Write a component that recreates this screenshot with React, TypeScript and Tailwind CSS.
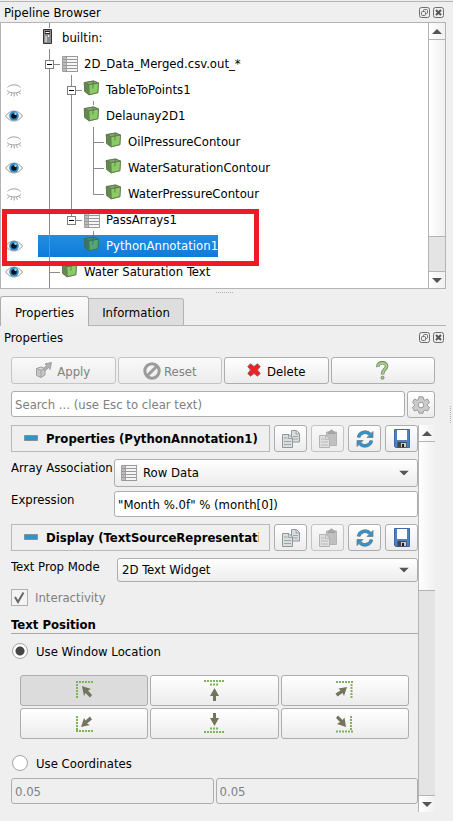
import { useState, type ReactNode } from 'react';

const EyeOpen = () => (
  <svg width="18" height="14" viewBox="0 0 18 14">
    <path d="M.5 7C3 3.600 6 2 9 2s6 1.600 8.500 5C15 10.400 12 12 9 12S3 10.400.5 7z" fill="#f6f6f6" stroke="#9a9a9a" />
    <circle cx="9" cy="6.800" r="4.800" fill="#2f8fc8" />
    <circle cx="9" cy="7" r="2.800" fill="#06131f" />
    <circle cx="10.500" cy="4.800" r="1.300" fill="#9fd2ee" />
  </svg>
);

const EyeClosed = () => (
  <svg width="18" height="14" viewBox="0 0 18 14" fill="none" stroke="#a0a0a0">
    <path d="M2.500 4.500C5 1 13 1 15.500 4.500" />
    <path d="M2 7.500c3 3.300 11 3.300 14 0M4 9.500l-1.500 2M6.800 10.300L6 13M9.200 10.300V13.500M11.500 10.200l.9 2.700M14 9.300l1.600 2" />
  </svg>
);

const Cube = ({ tinted = false }: { tinted?: boolean }) => (
  <svg width="17" height="16" viewBox="0 0 17 16">
    <path d="M.8 2.300L10.500.6l5.300 2.100-.6 10.300L6 15.200 1.300 11.500z" fill={tinted ? '#3f7f63' : '#6a8f55'} />
    <path d="M6 5l9.300-1.600-.5 9.200L6.300 14.500z" fill={tinted ? '#55a873' : '#8acb66'} />
    <path d="M1.800 3.300L5 5.500v8L2.200 11z" fill={tinted ? '#35756a' : '#5f8a50'} />
    <path d="M3 2.800L10.300 1.500 13.500 2.800 6 4z" fill={tinted ? '#3f8a76' : '#86a873'} />
    <path d="M1.300 2.600L5.800 4.800 15.500 3M5.800 4.800L6.200 14.800M10.300 1.200L9.800 8.500M1.300 2.600l9.200-1.600 5 2-.6 9.700-8.700 2.100-4.500-3.300z" fill="none" stroke={tinted ? '#3c6f62' : '#63784f'} strokeWidth=".9" />
  </svg>
);

const TableIcon = () => (
  <svg width="17" height="16" viewBox="0 0 17 16">
    <path d="M1 1h15v14H1z" fill="#f5f5f5" />
    <path d="M1 1h4v14H1z" fill="#bdbdbd" />
    <path d="M.5.5h15.500M.5 3.500h15.500M.5 6.500h15.500M.5 9.500h15.500M.5 12.500h15.500M.5 15.500h15.500" stroke="#999" />
    <path d="M.5.5v15M4.500 1v14M15.500 1v14" stroke="#a0a0a0" fill="none" />
  </svg>
);

const Server = () => (
  <svg width="9" height="15" viewBox="0 0 9 15">
    <path d="M.5.5h8v14h-8z" fill="#8d8d8d" stroke="#333" />
    <path d="M2 2h5v3H2z" fill="#222" />
    <path d="M2.500 3.500h4" stroke="#fff" />
    <path d="M2 7h2v6H2z" fill="#c5c5c5" />
    <path d="M5.500 6v2" stroke="#eee" />
  </svg>
);

type Node = {
  label: string;
  x: number;
  eye?: 'open' | 'closed';
  icon: ReactNode;
  iconPad: string;
  guides: string;
  toggle?: number;
  selected?: boolean;
};

// Guide coordinates start at the left edge of the label column, one 26px row high.
const nodes: Node[] = [
  { label: 'builtin:', x: 0, icon: <Server />, iconPad: 'pl-[4px] pb-[4px]', guides: 'M11.500-2V3M11.500 24V26' },
  { label: '2D_Data_Merged.csv.out_*', x: 22, icon: <TableIcon />, iconPad: 'pl-[1px]', guides: 'M11.500 0V26M16 13.500H22', toggle: 7 },
  { label: 'TableToPoints1', x: 44, eye: 'closed', icon: <Cube />, iconPad: 'pb-[4px]', guides: 'M11.500 0V26M33.500-2V26M38 13.500H44', toggle: 29 },
  { label: 'Delaunay2D1', x: 44, eye: 'open', icon: <Cube />, iconPad: 'pb-[4px]', guides: 'M11.500 0V26M33.500 0V26M55.500-2V2' },
  { label: 'OilPressureContour', x: 66, eye: 'closed', icon: <Cube />, iconPad: 'pb-[4px]', guides: 'M11.500 0V26M33.500 0V26M55.500-2V26M55.500 13.500H66' },
  { label: 'WaterSaturationContour', x: 66, eye: 'open', icon: <Cube />, iconPad: 'pb-[4px]', guides: 'M11.500 0V26M33.500 0V26M55.500 0V26M55.500 13.500H66' },
  { label: 'WaterPressureContour', x: 66, eye: 'closed', icon: <Cube />, iconPad: 'pb-[4px]', guides: 'M11.500 0V26M33.500 0V26M55.500 0V13.500H66' },
  { label: 'PassArrays1', x: 44, icon: <TableIcon />, iconPad: 'pl-[1px]', guides: 'M11.500 0V26M33.500 0V13.500M38 13.500H44', toggle: 29 },
  { label: 'PythonAnnotation1', x: 44, eye: 'open', icon: <Cube tinted />, iconPad: 'pb-[4px]', guides: 'M11.500 0V26M55.500-2V2', selected: true },
  { label: 'Water Saturation Text', x: 22, eye: 'open', icon: <Cube />, iconPad: 'pb-[4px]', guides: 'M11.500 0V30M11.500 13.500H22' },
];

const indent: Record<number, string> = { 0: 'w-[1px]', 22: 'w-[23px]', 44: 'w-[45px]', 66: 'w-[67px]' };

function TreeRow({ node }: { node: Node }) {
  return (
    <li className="flex h-[26px] items-center">
      <div className="flex w-[37px] shrink-0 pl-[4px]">
        {node.eye && (
          <button aria-label={`Toggle visibility of ${node.label}`}>
            {node.eye === 'open' ? <EyeOpen /> : <EyeClosed />}
          </button>
        )}
      </div>
      <div
        className={`relative flex h-[22px] items-center ${
          node.selected ? 'bg-linear-to-b from-[#228de0] to-[#0c7cdb] text-white' : ''
        }`}
      >
        <svg className="absolute -top-[2px] left-0 overflow-visible" width="67" height="26">
          <path d={node.guides} fill="none" stroke="#8a8a8a" />
          {node.toggle && (
            <>
              <rect x={node.toggle + 0.5} y="9.500" width="8" height="8" fill="#fff" stroke="#7d7d7d" />
              <path d={`M${node.toggle + 2} 13.500h5`} stroke="#000" />
            </>
          )}
        </svg>
        <span className={`shrink-0 ${indent[node.x]}`} />
        <span className={`flex w-[23px] shrink-0 ${node.iconPad}`}>{node.icon}</span>
        <span className="leading-[24px] whitespace-nowrap">{node.label}</span>
      </div>
    </li>
  );
}

function DockTitle({ title }: { title: string }) {
  return (
    <div className="flex h-[20px] items-center justify-between pr-[2px] pl-[4px]">
      <h2 className="pt-[2px]">{title}</h2>
      <div className="flex gap-[3px]">
        <button aria-label={`Float ${title}`}>
          <svg width="11" height="11" viewBox="0 0 11 11" fill="none" stroke="#6d6d6d">
            <rect x=".5" y=".5" width="10" height="10" rx="2" />
            <rect x="4.500" y="2.500" width="4" height="4" rx="1" />
            <rect x="2.500" y="4.500" width="4" height="4" rx="1" fill="#efefef" />
          </svg>
        </button>
        <button aria-label={`Close ${title}`}>
          <svg width="11" height="11" viewBox="0 0 11 11" fill="none" stroke="#6d6d6d">
            <rect x=".5" y=".5" width="10" height="10" rx="2" />
            <path d="M3 3l5 5M8 3L3 8" stroke="#555" strokeWidth="2" />
          </svg>
        </button>
      </div>
    </div>
  );
}

function ScrollBar({ thumb }: { thumb: string }) {
  return (
    <div className="flex w-[17px] shrink-0 flex-col border-l border-[#b4b4b4] bg-[#e4e4e4]">
      <button aria-label="Scroll up" className="flex h-[17px] items-center justify-center border-b border-[#b4b4b4] bg-linear-to-r from-white to-[#f0f0f0]">
        <svg width="10" height="5"><path d="M0 5L5 0l5 5z" fill="#555" /></svg>
      </button>
      <div className={`border-b border-[#b4b4b4] bg-linear-to-r from-white to-[#f0f0f0] ${thumb}`} />
      <div className="flex-1" />
      <button aria-label="Scroll down" className="flex h-[17px] items-center justify-center border-t border-[#b4b4b4] bg-linear-to-r from-white to-[#f0f0f0]">
        <svg width="10" height="5"><path d="M0 0L5 5l5-5z" fill="#555" /></svg>
      </button>
    </div>
  );
}

const face = 'rounded-[3px] border border-[#adadad] bg-linear-to-b from-white to-[#ececec]';
const faceOff = 'rounded-[3px] border border-[#c4c4c4] bg-linear-to-b from-[#f9f9f9] to-[#ececec]';
const field = 'min-w-0 rounded-[3px] border border-[#adadad] h-[26px] px-[3px]';

const CopyIcon = () => (
  <svg width="20" height="20" viewBox="0 0 20 20" fill="#d9dedf" stroke="#8f9798">
    <path d="M10.500 1.500h5l3 3v8.500h-8z" />
    <path d="M15 2v3h3.500M12 7.500h5M12 10h5" fill="none" strokeWidth=".8" />
    <path d="M1.500 5.500h6.500l3.500 3.500v9.500h-10z" />
    <path d="M7.500 6v3.500H11M3 9h3.500M3 12.500h7M3 15.500h7" fill="none" strokeWidth=".8" />
  </svg>
);

const PasteIcon = () => (
  <svg width="20" height="20" viewBox="0 0 20 20" fill="#dedede" stroke="#b3b3b3">
    <path d="M8.500 3h10v13.500h-10z" fill="#c0c0c0" />
    <path d="M10 4.500c0-2 1.500-2 2-2 0-2 3-2 3 0 .5 0 2 0 2 2z" fill="#aaa" stroke="#9f9f9f" />
    <path d="M1.500 6.500h6.500l3.500 3.500v8.500h-10z" />
    <path d="M7.500 7v3.500H11M3 10h3.500M3 13h7M3 16h7" fill="none" strokeWidth=".8" />
  </svg>
);

const ReloadIcon = () => (
  <svg width="20" height="20" viewBox="0 0 20 20">
    <path d="M3.500 8.500C4.500 3.500 11 1.200 15 5.200" fill="none" stroke="#747b7b" strokeWidth="3.600" />
    <path d="M18 2.500V8.500H12z" fill="#2f93cf" stroke="#747b7b" strokeWidth=".8" />
    <path d="M3.600 8.200C4.800 3.500 11 1.400 15 5.200" fill="none" stroke="#2f93cf" strokeWidth="2.600" />
    <path d="M16.500 11.500C15.500 16.500 9 18.800 5 14.800" fill="none" stroke="#747b7b" strokeWidth="3.600" />
    <path d="M2 17.500V11.500H8z" fill="#2f93cf" stroke="#747b7b" strokeWidth=".8" />
    <path d="M16.400 11.800C15.200 16.500 9 18.600 5 14.800" fill="none" stroke="#2f93cf" strokeWidth="2.600" />
  </svg>
);

const SaveIcon = () => (
  <svg width="18" height="20" viewBox="0 0 18 20">
    <path d="M1.500.5h15v18h-14l-1-1z" fill="#4f80c4" stroke="#3f68a5" />
    <path d="M4 1h10v10H4z" fill="#fff" />
    <path d="M4.500 13h9v5.500h-9z" fill="#444" />
    <path d="M8 14h5v4H8z" fill="#cfcdb9" />
    <path d="M9 15h2v3H9z" fill="#1b1b1b" />
  </svg>
);

function SectionHeader({ title }: { title: string }) {
  return (
    <div className="flex h-[27px] gap-[4px]">
      <button className="flex min-w-0 flex-1 items-center gap-[8px] border border-[#b8b8b8] pr-[10px] pl-[12px] text-left font-bold">
        <svg className="mb-[2px] shrink-0" width="14" height="6"><path d="M.5.5h13v5H.5z" fill="#2f93cf" stroke="#82909a" /></svg>
        <span className="overflow-hidden whitespace-nowrap">{title}</span>
      </button>
      <button aria-label="Copy" className={`flex w-[33px] items-center justify-center ${face}`}><CopyIcon /></button>
      <button aria-label="Paste" disabled className={`flex w-[33px] items-center justify-center ${faceOff}`}><PasteIcon /></button>
      <button aria-label="Restore defaults" className={`flex w-[33px] items-center justify-center ${face}`}><ReloadIcon /></button>
      <button aria-label="Save as defaults" className={`flex w-[33px] items-center justify-center ${face}`}><SaveIcon /></button>
    </div>
  );
}

const DropArrow = () => (
  <svg className="pointer-events-none absolute top-1/2 right-[9px] -translate-y-1/2" width="10" height="5">
    <path d="M0 0h10L5 5z" fill="#555" />
  </svg>
);

const anchors = [
  { name: 'Upper left', dots: 'M2 3h17M3 5v14', arrow: 'M8 7l9 3-3 1.500 4 4.500-2 2.500-4.500-4.500-1.500 3z' },
  { name: 'Upper center', dots: 'M0 2h20M6 5.500h9', arrow: 'M10.500 9l4.500 8h-3v5h-3v-5H6z' },
  { name: 'Upper right', dots: 'M2 3h17M17.500 5v14', arrow: 'M13 8l-3 9-1.500-3-5 3.500-2-3 5-3-2-2z' },
  { name: 'Lower left', dots: 'M3 4v14M2 19h17', arrow: 'M7 15l3-9 1.500 2.500L16 4.500l2 3-5 4 3 1.500z' },
  { name: 'Lower center', dots: 'M6 16.500h9M0 20h20', arrow: 'M10.500 14L6 6h3V1h3v5h3z' },
  { name: 'Lower right', dots: 'M17 4v14M2 19.500h17', arrow: 'M12 15l-9-3 3-2-4-4 2-2.500L8.500 8l2-2.500z' },
];

const radio =
  'size-[16px] shrink-0 appearance-none rounded-full border border-[#a3a3a3] bg-white checked:bg-[radial-gradient(circle,#454545_0,#454545_4px,white_5px)]';

export default function App() {
  const [anchor, setAnchor] = useState('Upper left');
  const [mode, setMode] = useState('window');

  return (
    <main className="flex min-h-screen flex-col bg-[#efefef] pr-[7px] font-['DejaVu_Sans_Condensed','DejaVu_Sans',sans-serif] text-[13px] leading-[16px] text-black">
      <section aria-label="Pipeline Browser">
        <div className="-mr-[7px] h-[2px] border-b border-[#b4b4b4]" />
        <DockTitle title="Pipeline Browser" />
        <div className="relative flex h-[267px] border border-[#b4b4b4] bg-white">
          <ul className="min-w-0 flex-1 overflow-hidden pt-[2px]">
            {nodes.map((n) => <TreeRow key={n.label} node={n} />)}
          </ul>
          <ScrollBar thumb="h-[197px]" />
          <div className="pointer-events-none absolute top-[186px] left-[1px] h-[57px] w-[257px] border-5 border-[#ed1c24]" />
        </div>
      </section>

      <div className="flex h-[7px] items-center justify-center pl-[2px]">
        <div className="w-[17px] border-t border-dotted border-[#b0b0b0]" />
      </div>

      <div role="tablist" className="flex h-[30px] items-end">
        <button role="tab" aria-selected="true" className="h-[30px] w-[89px] rounded-t-[3px] border border-b-0 border-[#adadad] bg-linear-to-b from-[#fafafa] to-[#efefef] pt-[2px]">Properties</button>
        <button role="tab" aria-selected="false" className="h-[28px] w-[95px] rounded-tr-[3px] border border-l-0 border-[#b4b4b4] bg-[#dedede] pt-[2px]">Information</button>
        <div className="h-px flex-1 bg-[#b4b4b4]" />
      </div>

      <section aria-label="Properties" className="flex flex-col pt-[1px]">
        <DockTitle title="Properties" />
        <div className="mt-[10px] mr-[11px] ml-[11px] grid grid-cols-4 gap-[2px] text-[#808080]">
          <button disabled className={`flex h-[27px] items-center justify-center gap-[5px] pt-[2px] ${faceOff}`}>
            <svg className="mb-[3px]" width="16" height="16" viewBox="0 0 16 16" fill="#c6c6c6" stroke="#a0a0a0">
              <path d="M.5 6.500L5 5l4 1.500v6.500l-4 2.500-4.500-2zM.5 6.500L5 8l4-1.500M5 8v7" />
              <path d="M7 7l4-4-2-1L15.500.5 14 7.500l-1.500-2L9 9z" fill="#b0b0b0" />
            </svg>
            Apply
          </button>
          <button disabled className={`flex h-[27px] items-center justify-center gap-[3px] pt-[2px] ${faceOff}`}>
            <svg className="mb-[2px]" width="18" height="18" viewBox="0 0 18 18" fill="none" stroke="#9b9b9b" strokeWidth="3">
              <circle cx="9" cy="9" r="7.200" /><path d="M4 14L14 4" />
            </svg>
            Reset
          </button>
          <button className={`flex h-[27px] items-center justify-center gap-[6px] pt-[2px] text-black ${face}`}>
            <svg className="mb-[3px]" width="14" height="14" viewBox="0 0 14 14"><path d="M.8 3.500L3.500.8 7 3.500 10.500.8l2.700 2.700L10.500 7l2.700 3.500-2.700 2.700L7 10.500l-3.500 2.700-2.700-2.700L3.500 7z" fill="#ef2027" stroke="#8d6a62" /></svg>
            Delete
          </button>
          <button aria-label="Help" className={`flex h-[27px] items-center justify-center ${face}`}>
            <svg width="13" height="19" viewBox="0 0 13 19" fill="none">
              <path d="M2 6C1.500 0 11 .5 10.500 5.500 10.300 8.500 6.500 8.500 6.500 13.500" stroke="#77806f" strokeWidth="3.600" />
              <path d="M2 5.500C2 .8 10.500.8 10.500 5.300 10.300 8.500 6.500 8.500 6.500 13" stroke="#a4d384" strokeWidth="2" />
              <circle cx="6.500" cy="16.700" r="1.500" fill="#a4d384" stroke="#77806f" />
            </svg>
          </button>
        </div>

        <div className="mt-[7px] mr-[11px] ml-[11px] flex gap-[2px]">
          <input type="search" aria-label="Search" placeholder="Search ... (use Esc to clear text)" className={`flex-1 bg-white placeholder:text-[#808080] ${field}`} />
          <button aria-label="Advanced properties" className={`flex h-[27px] w-[28px] items-center justify-center ${face}`}>
            <svg width="18" height="18" viewBox="0 0 18 18">
              <path d="M7 .8h4l.6 2.700 1.400.8L15.500 3l2 3.500-2 1.800v1.400l2 1.800-2 3.500-2.500-1-1.400.8L11 17.200H7l-.6-2.400-1.400-.8-2.500 1-2-3.500 2-1.800V8.300l-2-1.800L2.500 3 5 4.300l1.400-.8z" fill="#ccc" stroke="#999" />
              <circle cx="9" cy="9" r="2.800" fill="#f8f8f8" stroke="#999" />
            </svg>
          </button>
        </div>

        <div className="mt-[7px] mr-[11px] ml-[11px] flex">
          <div className="flex h-[387px] min-w-0 flex-1 flex-col overflow-hidden">
            <SectionHeader title="Properties (PythonAnnotation1)" />
            <div className="mt-[7px] grid grid-cols-[103px_1fr] gap-y-[4px]">
              <label htmlFor="association" className="pt-[1px] whitespace-nowrap">Array Association</label>
              <div className="relative flex">
                <select id="association" className={`h-[28px] w-full appearance-none pl-[28px] ${face}`}><option>Row Data</option></select>
                <span className="pointer-events-none absolute top-[6px] left-[7px]"><TableIcon /></span>
                <DropArrow />
              </div>
              <label htmlFor="expression" className="pt-[1px]">Expression</label>
              <input id="expression" defaultValue={'"Month %.0f" % (month[0])'} className={`bg-white ${field}`} />
            </div>
            <div className="mt-[7px]"><SectionHeader title="Display (TextSourceRepresentation)" /></div>
            <div className="mt-[7px] grid grid-cols-[106px_1fr]">
              <label htmlFor="mode" className="pt-[1px]">Text Prop Mode</label>
              <div className="relative flex">
                <select id="mode" className={`h-[24px] w-full appearance-none pl-[4px] ${face}`}><option>2D Text Widget</option></select>
                <DropArrow />
              </div>
            </div>
            <label className="mt-[6px] flex items-center gap-[7px] text-[#808080]">
              <span className="relative flex">
                <input type="checkbox" defaultChecked disabled className="size-[17px] appearance-none border border-[#b0b0b0] bg-[#f4f4f4]" />
                <svg className="absolute inset-0" width="17" height="17"><path d="M4 8l3 5 5.500-9.500" fill="none" stroke="#666" strokeWidth="2" /></svg>
              </span>
              <span className="pt-[2px]">Interactivity</span>
            </label>
            <h3 className="mt-[10px] h-[18px] border-b border-[#a8a8a8] pt-[1px] font-bold">Text Position</h3>
            <label className="mt-[9px] flex items-center gap-[8px] pl-px">
              <input type="radio" name="placement" checked={mode === 'window'} onChange={() => setMode('window')} className={radio} />
              <span className="h-[16px] leading-[18px]">Use Window Location</span>
            </label>
            <div className="mt-[16px] mr-[9px] ml-[9px] grid grid-cols-3 gap-[2px]">
              {anchors.map((a) => (
                <button
                  key={a.name}
                  aria-label={a.name}
                  aria-pressed={anchor === a.name}
                  onClick={() => setAnchor(a.name)}
                  className={`flex h-[31px] items-center justify-center rounded-[3px] border border-[#adadad] ${
                    anchor === a.name ? 'bg-[#dcdcdc]' : 'bg-linear-to-b from-white to-[#ececec]'
                  }`}
                >
                  <svg width="21" height="23" viewBox="0 0 21 23">
                    <path d={a.dots} fill="none" stroke="#7fb359" strokeWidth="2" strokeDasharray="2 1" />
                    <path d={a.arrow} fill="#73745c" />
                  </svg>
                </button>
              ))}
            </div>
            <label className="mt-[16px] flex items-center gap-[8px] pl-px">
              <input type="radio" name="placement" checked={mode === 'coordinates'} onChange={() => setMode('coordinates')} className={radio} />
              <span className="h-[16px] leading-[18px]">Use Coordinates</span>
            </label>
            <div className="mt-[7px] grid grid-cols-2 gap-[2px] text-[#808080]">
              <input aria-label="X coordinate" disabled defaultValue="0.05" className={field} />
              <input aria-label="Y coordinate" disabled defaultValue="0.05" className={field} />
            </div>
          </div>
          <ScrollBar thumb="h-[149px]" />
        </div>
      </section>
      <div className="absolute top-[406px] right-[2px] h-[17px] border-l border-dotted border-[#b0b0b0]" />
    </main>
  );
}
